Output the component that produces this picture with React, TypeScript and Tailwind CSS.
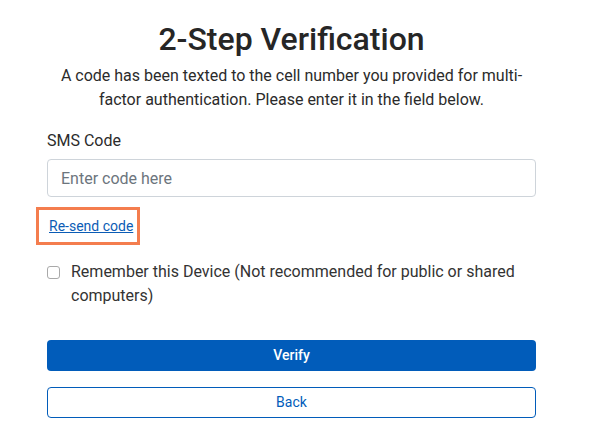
import React from "react";

const App: React.FC = () => {
  return (
    <div className="min-h-screen bg-white font-['Roboto',sans-serif] text-[#212529]">
      <div className="ml-[47px] w-[489px] pt-[20px]">
        <h1 className="text-center text-[32px] font-medium leading-[38px] text-[#262626]">
          2-Step Verification
        </h1>
        <p className="mt-[6px] px-[12px] text-center text-[16px] leading-[24px] text-[#2b2b2b]">
          A code has been texted to the cell number you provided for multi-factor authentication. Please enter it in the
          field below.
        </p>

        <label htmlFor="sms" className="mt-[17px] block text-[16px] leading-[24px] text-[#2b2b2b]">
          SMS Code
        </label>
        <input
          id="sms"
          type="text"
          placeholder="Enter code here"
          className="mt-[6px] block h-[38px] w-full rounded-[4px] border border-[#ced4da] px-[13px] text-[16px] text-[#212529] outline-none placeholder:text-[#6c757d]"
        />

        {/* highlighted link */}
        <div className="-ml-[11px] mt-[10px] inline-flex h-[38px] items-center border-[3px] border-[#f47d4e] pl-[10px] pr-[4px]">
          <a href="#" className="text-[14px] leading-[20px] text-[#0b5cb5] underline">
            Re-send code
          </a>
        </div>

        <label className="mt-[15px] flex items-start gap-[11px]">
          <span className="mt-[6px] block h-[13px] w-[13px] shrink-0 rounded-[3px] border border-[#a9a9a9] bg-white" />
          <span className="text-[16px] leading-[24px] text-[#333333]">
            Remember this Device (Not recommended for public or shared computers)
          </span>
        </label>

        <div className="mt-[32px] flex flex-col gap-[16px]">
          <button className="h-[31px] w-full rounded-[4px] bg-[#015cba] text-[14px] font-medium text-white">
            Verify
          </button>
          <button className="h-[31px] w-full rounded-[4px] border border-[#015cba] bg-white text-[14px] text-[#015cba]">
            Back
          </button>
        </div>
      </div>
    </div>
  );
};

export default App;
